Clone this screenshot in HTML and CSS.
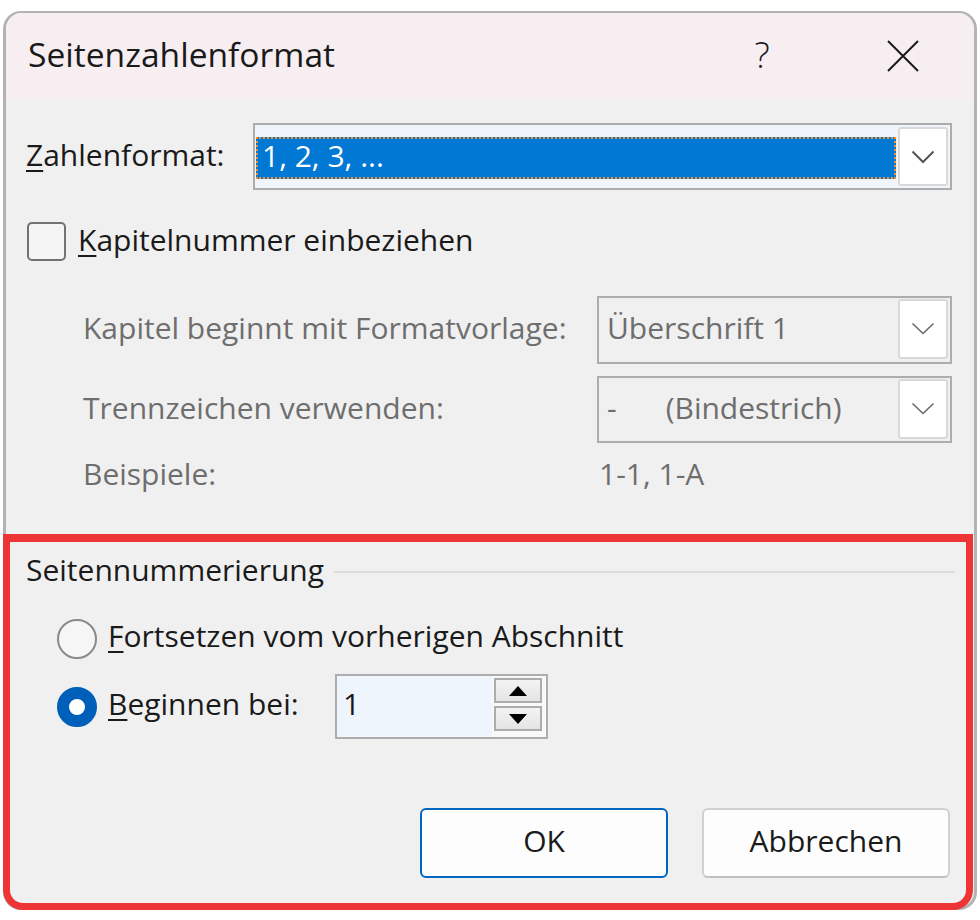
FILE: index.html
```html
<!DOCTYPE html>
<html lang="de">
<head>
<meta charset="utf-8">
<title>Seitenzahlenformat</title>
<link rel="stylesheet" href="styles.css">
</head>
<body>
<div class="window">
  <div class="titlebar">
    <div class="title">Seitenzahlenformat</div>
    <div class="tb-btn help">?</div>
    <div class="tb-btn close">
      <svg width="32" height="32" viewBox="0 0 32 32"><path d="M1 1 L31 31 M31 1 L1 31" stroke="#1b1b1b" stroke-width="2" fill="none"/></svg>
    </div>
  </div>
  <div class="content">
    <div class="row row-format">
      <span class="lbl-format txt"><u>Z</u>ahlenformat:</span>
      <div class="combo combo-active">
        <div class="selected txt">1, 2, 3, ...</div>
        <div class="drop">
          <svg width="24" height="14" viewBox="0 0 24 14"><path d="M1.5 1.5 L12 12 L22.5 1.5" stroke="#555" stroke-width="2" fill="none"/></svg>
        </div>
      </div>
    </div>
    <div class="row row-check">
      <span class="checkbox"></span>
      <span class="check-label txt"><u>K</u>apitelnummer einbeziehen</span>
    </div>
    <div class="row row-dis row-style">
      <span class="lbl-dis txt">Kapitel beginnt mit Formatvorlage:</span>
      <div class="combo combo-dis">
        <div class="combo-value txt">Überschrift 1</div>
        <div class="drop">
          <svg width="24" height="14" viewBox="0 0 24 14"><path d="M1.5 1.5 L12 11.5 L22.5 1.5" stroke="#6a6a6a" stroke-width="1.6" fill="none"/></svg>
        </div>
      </div>
    </div>
    <div class="row row-dis row-sep">
      <span class="lbl-dis txt">Trennzeichen verwenden:</span>
      <div class="combo combo-dis combo-sep">
        <div class="combo-value txt"><span class="dash">-</span><span class="dash-name">(Bindestrich)</span></div>
        <div class="drop">
          <svg width="24" height="14" viewBox="0 0 24 14"><path d="M1.5 1.5 L12 11.5 L22.5 1.5" stroke="#6a6a6a" stroke-width="1.6" fill="none"/></svg>
        </div>
      </div>
    </div>
    <div class="row row-dis row-example">
      <span class="lbl-dis txt">Beispiele:</span>
      <span class="example-value txt">1-1, 1-A</span>
    </div>
  </div>
  <div class="numbering">
    <div class="group-head">
      <span class="group-title txt">Seitennummerierung</span>
      <span class="group-line"></span>
    </div>
    <div class="radio-row radio-row-first">
      <span class="radio"></span>
      <span class="radio-label txt-r"><u>F</u>ortsetzen vom vorherigen Abschnitt</span>
    </div>
    <div class="radio-row radio-row-second">
      <span class="radio checked"></span>
      <span class="radio-label start-label txt-r"><u>B</u>eginnen bei:</span>
      <div class="spin">
        <div class="spin-value txt-r">1</div>
        <div class="spin-btns">
          <div class="spin-btn">
            <svg width="18" height="10" viewBox="0 0 18 10"><path d="M9 0 L18 10 L0 10 Z" fill="#000"/></svg>
          </div>
          <div class="spin-btn">
            <svg width="18" height="10" viewBox="0 0 18 10"><path d="M0 0 L18 0 L9 10 Z" fill="#000"/></svg>
          </div>
        </div>
      </div>
    </div>
    <div class="buttons">
      <button class="btn btn-ok">OK</button>
      <button class="btn btn-cancel">Abbrechen</button>
    </div>
  </div>
</div>
</body>
</html>
```

FILE: styles.css
```css
* {
  box-sizing: border-box;
}

body {
  margin: 0;
  background: #ffffff;
  font-family: "Open Sans", "Noto Sans", sans-serif;
  font-size: 30px;
  color: #1a1a1a;
}

u {
  text-decoration-thickness: 2px;
  text-underline-offset: 4px;
}

/* lift text slightly so glyphs sit centred like the Segoe UI original */
.txt {
  padding-bottom: 5px;
}

.txt-r {
  padding-bottom: 7px;
}

.window {
  margin: 11px 0 0 3px;
  width: 974px;
  border: 3px solid #b3b3b3;
  border-top-width: 2px;
  border-radius: 18px;
  background: #f0f0f0;
}

.titlebar {
  height: 86px;
  background: #f7eef2;
  border-radius: 16px 16px 0 0;
  display: flex;
  align-items: center;
}

.title {
  flex: 1;
  padding-left: 22px;
  padding-bottom: 3px;
  font-size: 33.6px;
  line-height: 1;
  color: #1a1a1a;
}

.tb-btn {
  width: 60px;
  height: 60px;
  display: flex;
  align-items: center;
  justify-content: center;
}

.help {
  font-size: 36px;
  font-weight: 300;
  color: #1a1a1a;
  margin-right: 81px;
  padding-bottom: 4px;
}

.close {
  margin-right: 41px;
}

.content {
  padding: 24px 22px 0 20px;
}

.row {
  display: flex;
  align-items: center;
}

.row-format {
  height: 67px;
}

.lbl-format {
  width: 227px;
  flex: none;
}

.combo {
  flex: 1;
  border: 2px solid #adadad;
  display: flex;
  align-items: center;
}

.combo-active {
  height: 67px;
  background: #eff5fb;
  padding: 0 2px 0 1px;
}

.selected {
  flex: 1;
  height: 42px;
  margin-right: 2px;
  margin-top: 2px;
  background: #0078d4;
  color: #ffffff;
  border: 2px dotted #f7902a;
  padding-left: 4px;
  display: flex;
  align-items: center;
}

.drop {
  flex: none;
  width: 50px;
  background: #ffffff;
  border: 2px solid #d9d9d9;
  border-radius: 3px;
  display: flex;
  align-items: center;
  justify-content: center;
}

.combo-active .drop {
  height: 59px;
}

.row-check {
  margin-top: 32px;
  height: 39px;
  padding-left: 1px;
}

.checkbox {
  width: 39px;
  height: 39px;
  border: 2px solid #727272;
  border-radius: 5px;
  background: #f5f5f5;
  flex: none;
}

.check-label {
  margin-left: 12px;
}

.row-dis {
  padding-left: 57px;
  color: #6e6e6e;
}

.lbl-dis {
  width: 514px;
  flex: none;
}

.row-style {
  margin-top: 35px;
}

.row-sep {
  margin-top: 12px;
}

.combo-dis {
  height: 68px;
  background: #f0f0f0;
  padding: 0 2px 0 8px;
}

.combo-sep {
  height: 67px;
}

.combo-dis .drop {
  height: 60px;
  margin-top: -2px;
}

.combo-value {
  flex: 1;
  color: #6e6e6e;
}

.dash-name {
  margin-left: 49px;
}

.row-example {
  margin-top: 12px;
  height: 42px;
}

.example-value {
  margin-left: 2px;
}

.numbering {
  margin: 37px 1px -3px -3px;
  border: 7px solid #ee3535;
  border-top-width: 8px;
  border-radius: 0 0 20px 20px;
  padding: 12px 16px 25px 16px;
}

.group-head {
  height: 36px;
  display: flex;
  align-items: center;
}

.group-line {
  flex: 1;
  height: 2px;
  background: #dcdcdc;
  margin-left: 10px;
  margin-right: -5px;
}

.radio-row {
  display: flex;
  align-items: center;
  padding-left: 31px;
}

.radio-row-first {
  margin-top: 29px;
  height: 40px;
}

.radio-row-second {
  margin-top: 15px;
  height: 65px;
}

.radio {
  width: 40px;
  height: 40px;
  flex: none;
  border-radius: 50%;
  border: 2px solid #8a8a8a;
  background: #f6f6f6;
}

.radio.checked {
  border: 12px solid #005fb8;
  background: #ffffff;
}

.radio-label {
  margin-left: 11px;
}

.start-label {
  width: 227px;
  flex: none;
}

.spin {
  width: 213px;
  height: 65px;
  border: 2px solid #adadad;
  background: #eef5fc;
  display: flex;
  align-items: stretch;
}

.spin-value {
  flex: 1;
  padding-left: 6px;
  display: flex;
  align-items: center;
  color: #1a1a1a;
}

.spin-btns {
  flex: none;
  background: #f8f8f8;
  padding: 2px 4px 3px 2px;
  display: flex;
  flex-direction: column;
  gap: 3px;
}

.spin-btn {
  width: 48px;
  height: 25px;
  border: 2px solid #acacac;
  background: linear-gradient(#f3f3f3, #e4e4e4);
  display: flex;
  align-items: center;
  justify-content: center;
}

.buttons {
  margin-top: 69px;
  display: flex;
  justify-content: flex-end;
  gap: 34px;
}

.btn {
  width: 248px;
  height: 70px;
  border: 2px solid #d0d0d0;
  border-bottom-color: #c2c2c2;
  border-radius: 6px;
  background: #fdfdfd;
  font-family: "Open Sans", "Noto Sans", sans-serif;
  font-size: 30px;
  color: #1a1a1a;
  padding: 0 0 6px 0;
}

.btn-ok {
  border-color: #0067c0;
}
```
